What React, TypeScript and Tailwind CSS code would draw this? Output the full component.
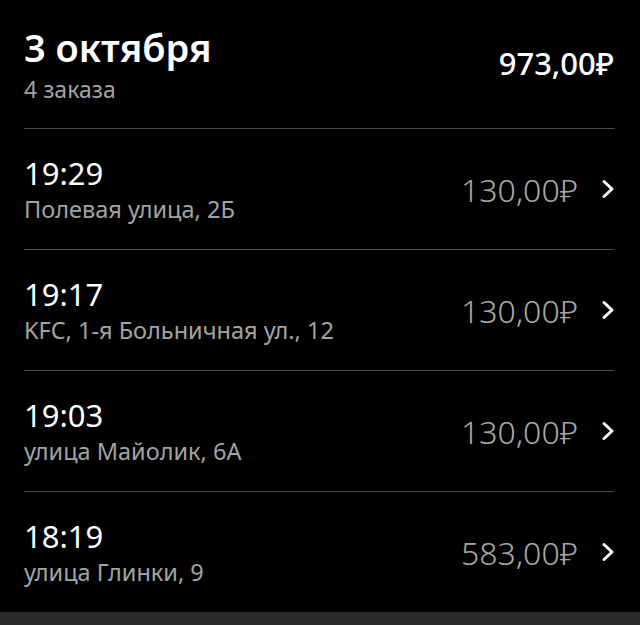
interface Order {
  time: string
  address: string
  price: string
}

const orders: Order[] = [
  { time: '19:29', address: 'Полевая улица, 2Б', price: '130,00₽' },
  { time: '19:17', address: 'KFC, 1-я Больничная ул., 12', price: '130,00₽' },
  { time: '19:03', address: 'улица Майолик, 6А', price: '130,00₽' },
  { time: '18:19', address: 'улица Глинки, 9', price: '583,00₽' },
]

function Chevron() {
  return (
    <svg
      className="ml-[23px] mr-[-1px] h-[20px] w-[14px] text-white"
      viewBox="0 0 14 20"
      fill="none"
      stroke="currentColor"
      strokeWidth={3}
      strokeLinecap="round"
      strokeLinejoin="round"
    >
      <polyline points="3,2.5 11,10 3,17.5" />
    </svg>
  )
}

function OrderRow({ order }: { order: Order }) {
  return (
    <div className="flex h-[121px] items-center border-t border-[#4a4a4a]">
      <div className="flex-1">
        <div className="text-[31px] leading-[38px] text-white">{order.time}</div>
        <div className="mt-[2px] text-[23.5px] leading-[30px] text-[#a3a3a3]">{order.address}</div>
      </div>
      <div className="pt-[1px] text-[32px] font-light leading-[40px] text-[#a8a8a8]">{order.price}</div>
      <Chevron />
    </div>
  )
}

export default function App() {
  return (
    <div
      className="flex h-[625px] w-[640px] flex-col bg-black"
      style={{ fontFamily: '"Noto Sans", sans-serif' }}
    >
      <div className="flex-1 px-[24px] pr-[26px]">
        <div className="flex h-[128px] items-start justify-between pt-[21px]">
          <div>
            <div className="text-[38px] font-semibold leading-[52px] text-white">3 октября</div>
            <div className="mt-[1px] text-[23px] leading-[30px] text-[#a3a3a3]">4 заказа</div>
          </div>
          <div className="pt-[22px] text-[31px] font-medium leading-[40px] text-white">973,00₽</div>
        </div>
        {orders.map((o) => (
          <OrderRow key={o.time} order={o} />
        ))}
      </div>
      <div className="h-[16px] bg-[#2b2b2b]" />
    </div>
  )
}
